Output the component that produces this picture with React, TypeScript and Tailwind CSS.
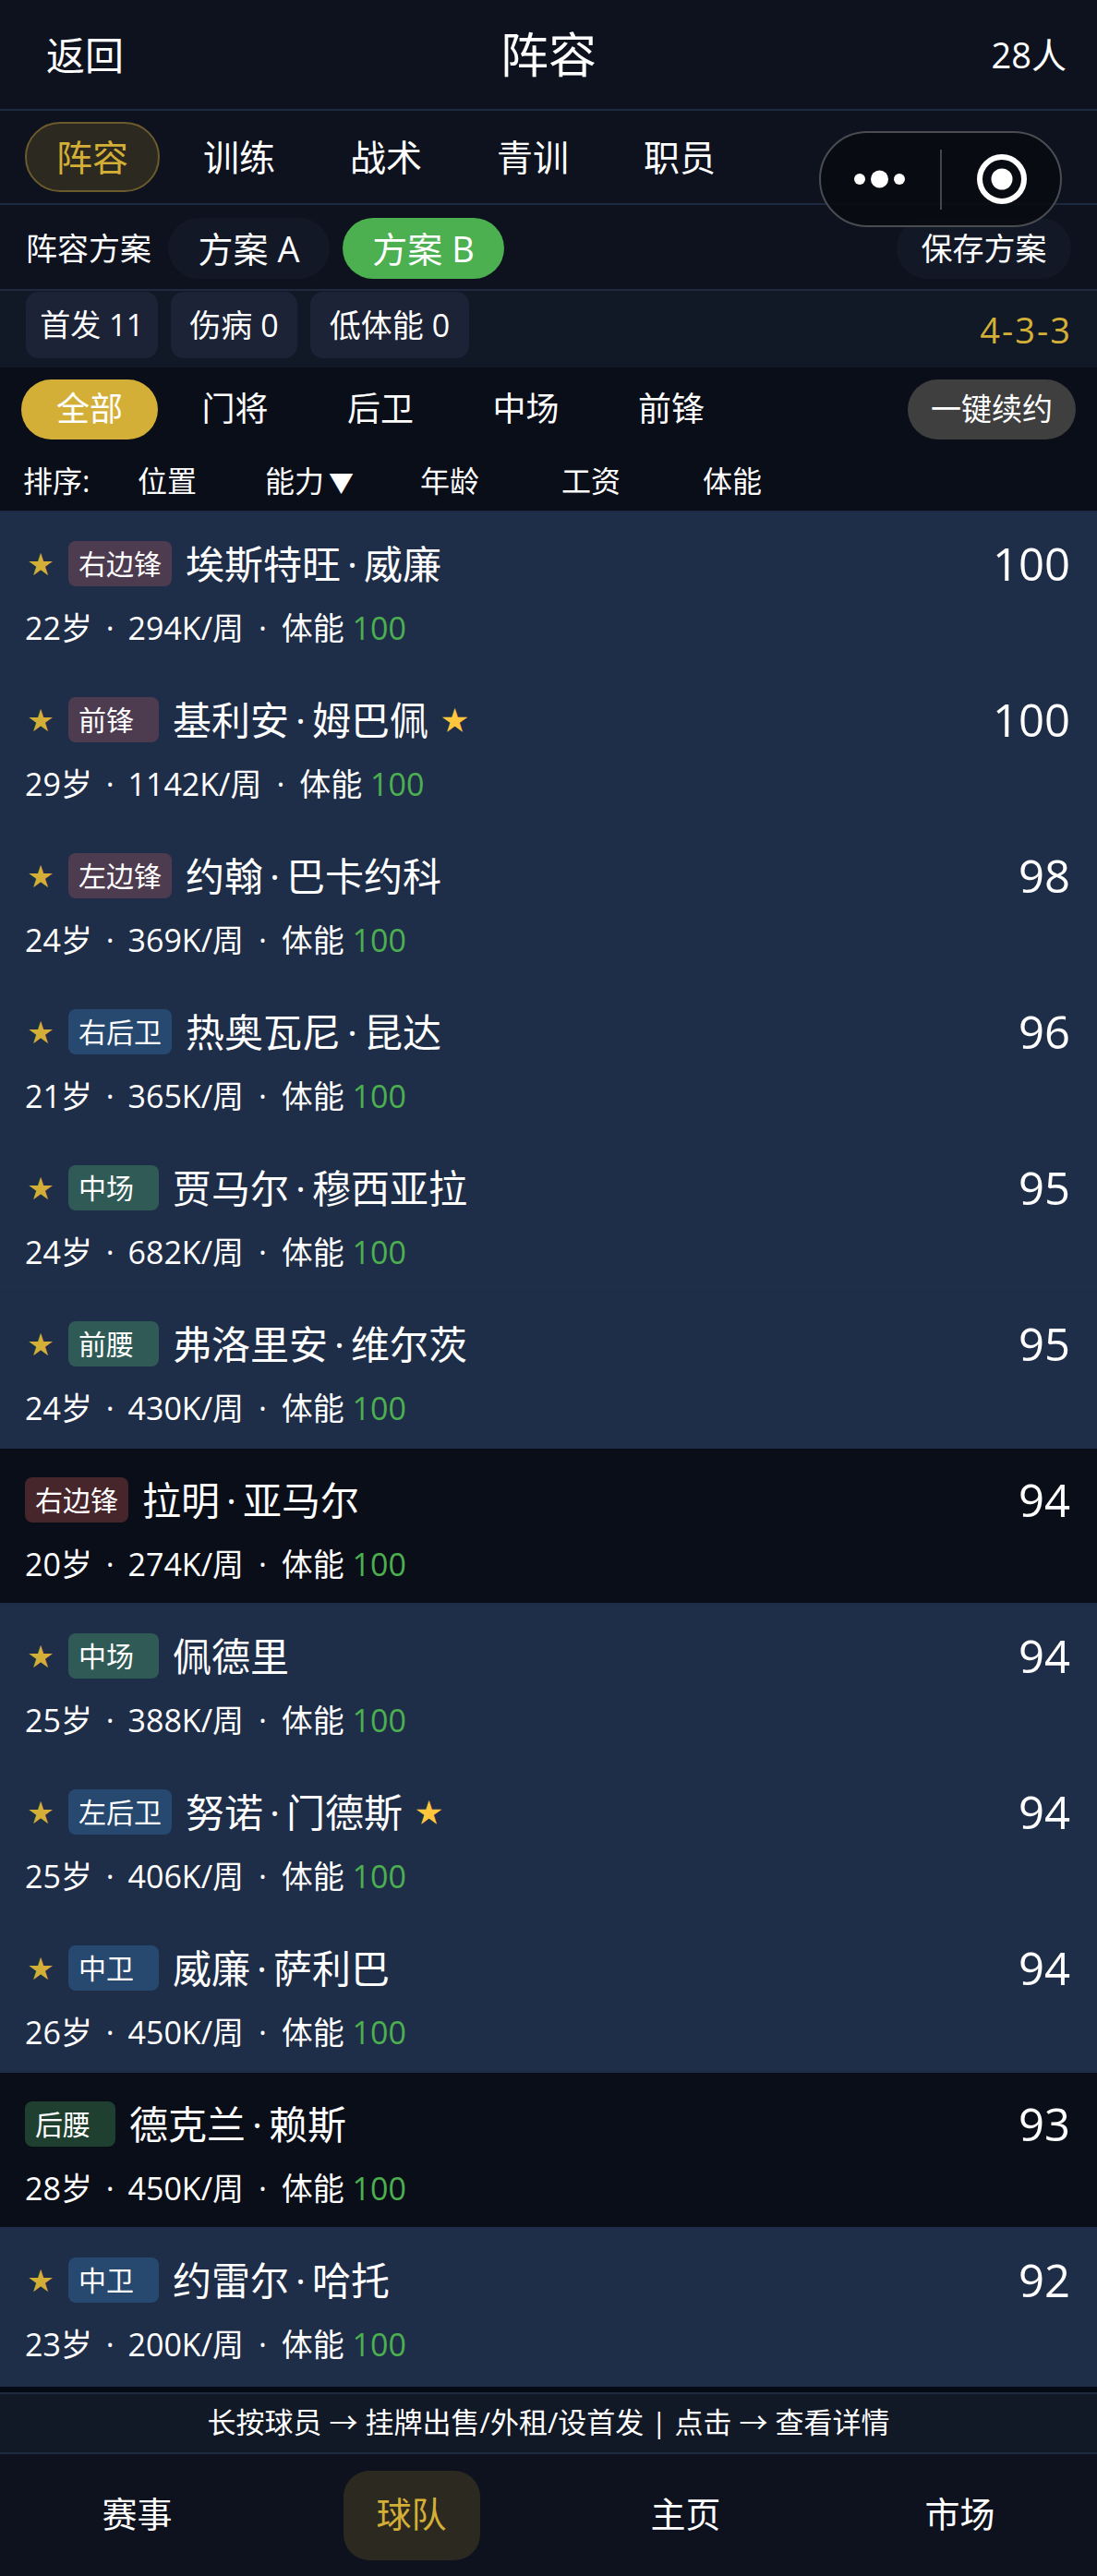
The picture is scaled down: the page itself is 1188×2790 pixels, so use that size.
const tabs = ['阵容', '训练', '战术', '青训', '职员'];
const filters = ['全部', '门将', '后卫', '中场', '前锋'];

type Player = {
  pos: string;
  name: string;
  age: number;
  wage: string;
  rating: number;
  starter?: boolean;
  fav?: boolean;
};

const players: Player[] = [
  { pos: '右边锋', name: '埃斯特旺·威廉', age: 22, wage: '294K', rating: 100, starter: true },
  { pos: '前锋', name: '基利安·姆巴佩', age: 29, wage: '1142K', rating: 100, starter: true, fav: true },
  { pos: '左边锋', name: '约翰·巴卡约科', age: 24, wage: '369K', rating: 98, starter: true },
  { pos: '右后卫', name: '热奥瓦尼·昆达', age: 21, wage: '365K', rating: 96, starter: true },
  { pos: '中场', name: '贾马尔·穆西亚拉', age: 24, wage: '682K', rating: 95, starter: true },
  { pos: '前腰', name: '弗洛里安·维尔茨', age: 24, wage: '430K', rating: 95, starter: true },
  { pos: '右边锋', name: '拉明·亚马尔', age: 20, wage: '274K', rating: 94 },
  { pos: '中场', name: '佩德里', age: 25, wage: '388K', rating: 94, starter: true },
  { pos: '左后卫', name: '努诺·门德斯', age: 25, wage: '406K', rating: 94, starter: true, fav: true },
  { pos: '中卫', name: '威廉·萨利巴', age: 26, wage: '450K', rating: 94, starter: true },
  { pos: '后腰', name: '德克兰·赖斯', age: 28, wage: '450K', rating: 93 },
  { pos: '中卫', name: '约雷尔·哈托', age: 23, wage: '200K', rating: 92, starter: true },
];

function badgeClass(pos: string, starter?: boolean) {
  if (pos.includes('锋')) return starter ? 'bg-[#4d3b4f]' : 'bg-[#46252b]';
  if (pos.includes('卫')) return 'bg-[#27486f]';
  return starter ? 'bg-[#2f5a56]' : 'bg-[#1f4030]';
}

function PlayerRow({ p }: { p: Player }) {
  const [first, last] = p.name.split('·');
  return (
    <div className={`h-[169px] border-b-2 border-[#1f2c47] pl-[27px] pr-[29px] pt-[31px] last:h-[171px] ${p.starter ? 'bg-[#1f2e48]' : 'bg-[#0a0e18]'}`}>
      <div className="flex h-[49px] items-center justify-between">
        <div className="flex items-center">
          {p.starter && <span className="mr-[13px] w-[34px] text-center text-[27px] leading-none text-[#d4af37]">★</span>}
          <span className={`flex h-[49px] min-w-[98px] items-center rounded-[8px] px-[11px] text-[30px] text-white ${badgeClass(p.pos, p.starter)}`}>{p.pos}</span>
          <span className="ml-[15px] text-[42px] leading-none text-white">
            {first}
            {last && <span className="mx-[7px]">·</span>}
            {last}
          </span>
          {p.fav && <span className="ml-[14px] text-[29px] leading-none text-[#ffc53d]">★</span>}
        </div>
        <span className="text-[49px] leading-none text-white">{p.rating}</span>
      </div>
      <div className="mt-[24px] text-[34px] leading-[42px] text-white">
        {p.age}岁 <span className="mx-[6px]">·</span> {p.wage}/周 <span className="mx-[7px]">·</span> 体能 <span className="text-[#4caf50]">100</span>
      </div>
    </div>
  );
}

export default function App() {
  return (
    <div
      className="relative flex h-[2790px] w-[1188px] flex-col overflow-hidden bg-[#0a0e18] text-white"
      style={{ fontFamily: '"Open Sans", "Noto Sans CJK SC", sans-serif' }}
    >
      <header className="grid h-[120px] grid-cols-3 items-center border-b-2 border-[#1e2a40] bg-[#0d121e] pl-[50px] pr-[33px]">
        <span className="text-[42px]">返回</span>
        <span className="-ml-[17px] text-center text-[52px]">阵容</span>
        <span className="text-right text-[38px]">28人</span>
      </header>

      <nav className="flex h-[102px] items-center gap-[13px] border-b-2 border-[#1e2a40] bg-[#0d121e] pl-[27px]">
        {tabs.map((t, i) => (
          <span
            key={t}
            className={
              i === 0
                ? 'flex h-[76px] w-[146px] items-center justify-center rounded-full border-2 border-[#6b5a2c] bg-[#2b2920] text-[39px] text-[#d4af37]'
                : 'w-[146px] text-center text-[39px] text-white'
            }
          >
            {t}
          </span>
        ))}
      </nav>

      <div className="flex h-[93px] items-start justify-between border-b-2 border-[#1e2a40] bg-[#0d121e] pl-[28px] pr-[28px] pt-[14px]">
        <div className="flex items-center">
          <span className="w-[136px] text-[34px]">阵容方案</span>
          <span className="ml-[18px] flex h-[66px] w-[175px] items-center justify-center rounded-full bg-[#121826] text-[38px]">方案 A</span>
          <span className="ml-[14px] flex h-[66px] w-[175px] items-center justify-center rounded-full bg-[#4caf50] text-[38px]">方案 B</span>
        </div>
        <span className="flex h-[66px] w-[189px] items-center justify-center rounded-full bg-[#121826] text-[34px]">保存方案</span>
      </div>

      <div className="flex h-[83px] items-start justify-between bg-[#111826] pl-[28px] pr-[27px] pt-[1px]">
        <div className="flex gap-[14px]">
          <span className="flex h-[72px] w-[143px] items-center justify-center rounded-[14px] bg-[#1c2336] text-[33px]">首发 11</span>
          <span className="flex h-[72px] w-[137px] items-center justify-center rounded-[14px] bg-[#1c2336] text-[34px]">伤病 0</span>
          <span className="flex h-[72px] w-[172px] items-center justify-center rounded-[14px] bg-[#1c2336] text-[34px]">低体能 0</span>
        </div>
        <span className="mt-[18px] text-[38px] leading-[46px] tracking-[2px] text-[#d4af37]">4-3-3</span>
      </div>

      <div className="flex h-[90px] items-start justify-between bg-[#0a0e18] pl-[23px] pr-[23px] pt-[13px]">
        <div className="flex items-center gap-[9.5px]">
          {filters.map((f, i) => (
            <span
              key={f}
              className={`flex h-[65px] w-[148px] items-center justify-center pb-[2px] text-[36px] ${i === 0 ? 'rounded-full bg-[#d4af37]' : ''}`}
            >
              {f}
            </span>
          ))}
        </div>
        <span className="flex h-[65px] w-[182px] items-center justify-center rounded-full bg-[#3f3f3f] pb-[2px] text-[33px]">一键续约</span>
      </div>

      <div className="flex h-[65px] items-center bg-[#0a0e18] pl-[25px] text-[32px]">
        <span className="w-[124px]">排序:</span>
        <span className="w-[138px]">位置</span>
        <span className="w-[168px]">
          能力<span className="ml-[5px] text-[27px]">▼</span>
        </span>
        <span className="w-[153px]">年龄</span>
        <span className="w-[153px]">工资</span>
        <span>体能</span>
      </div>

      <div className="h-[2px] bg-[#1e2844]" />
      <div className="flex-1 overflow-hidden bg-[#060a14]">
        {players.map((p) => (
          <PlayerRow key={p.name} p={p} />
        ))}
      </div>

      <div className="flex h-[67px] items-center justify-center border-y-2 border-[#1e2a40] bg-[#111826] pb-[2px] text-[31px]">
        长按球员 → 挂牌出售/外租/设首发 | 点击 → 查看详情
      </div>
      <div className="grid h-[132px] grid-cols-4 items-center bg-[#0d121e] text-[38px]">
        <span className="pb-[4px] text-center">赛事</span>
        <span className="flex justify-center">
          <span className="flex h-[97px] w-[148px] items-center justify-center rounded-[28px] bg-[#2b2920] pb-[4px] text-[#d4af37]">球队</span>
        </span>
        <span className="pb-[4px] text-center">主页</span>
        <span className="pb-[4px] text-center">市场</span>
      </div>

      <div className="absolute left-[887px] top-[142px] flex h-[104px] w-[263px] items-center rounded-full border-2 border-[#4a4c52] bg-[#090b11]/90">
        <svg className="ml-[36px]" width="55" height="20" viewBox="0 0 55 20" fill="#fff">
          <circle cx="6" cy="10" r="6" />
          <circle cx="27.5" cy="10" r="9.5" />
          <circle cx="49" cy="10" r="6" />
        </svg>
        <div className="ml-[38px] h-[65px] w-[2px] bg-[#44464c]" />
        <svg className="ml-[38px]" width="54" height="54" viewBox="0 0 54 54" fill="none">
          <circle cx="27" cy="27" r="24" stroke="#fff" strokeWidth="6" />
          <circle cx="27" cy="27" r="11.5" fill="#fff" />
        </svg>
      </div>
    </div>
  );
}
